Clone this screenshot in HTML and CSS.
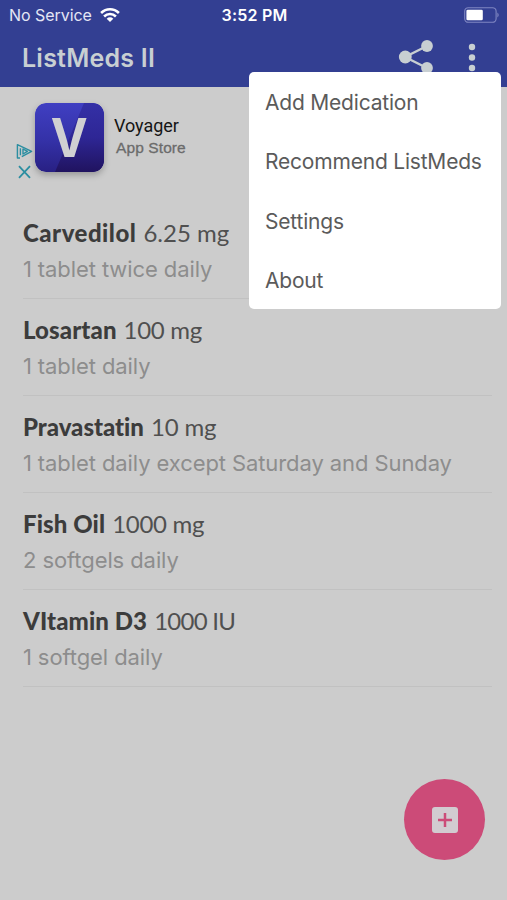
FILE: index.html
```html
<!DOCTYPE html>
<html lang="en">
<head>
<meta charset="utf-8">
<title>ListMeds II</title>
<link rel="stylesheet" href="styles.css">
</head>
<body>
<div class="screen">
  <header class="header">
    <div class="status">
      <div class="carrier"><span class="carrier-name">No Service</span>
        <svg class="wifi" width="20" height="16" viewBox="0 0 20 16" fill="none" stroke="#fff" stroke-width="2.6"><path d="M1.1 6C6.2.9 13.8.9 18.9 6M4.1 9.5C7.5 6.2 12.5 6.2 15.9 9.5"/><path d="M10 15 6.7 11.7C8.6 9.9 11.4 9.9 13.3 11.7Z" fill="#fff" stroke="none"/></svg>
      </div>
      <time class="clock">3:52 PM</time>
      <svg class="battery" width="37" height="16" viewBox="0 0 37 16"><rect x="1.7" y=".7" width="31.4" height="14.6" rx="3.6" fill="none" stroke="#8087c2" stroke-width="1.1"/><rect x="3.4" y="2.7" width="16.4" height="10.6" rx="1.4" fill="#fff"/><path d="M34.4 5.5q2.6 2.5 0 5z" fill="#8087c2"/></svg>
    </div>
    <div class="toolbar">
      <h1 class="title">ListMeds II</h1>
      <svg class="share" width="36" height="36" viewBox="0 0 36 36" fill="#c8cfd2"><path d="M29 7 7 18 29 29" fill="none" stroke="#c8cfd2" stroke-width="2.4"/><circle cx="29" cy="7" r="5.9"/><circle cx="7.3" cy="18" r="6.4"/><circle cx="29" cy="29" r="5.9"/></svg>
      <svg class="more" width="8" height="30" viewBox="0 0 8 30" fill="#c8cfd2"><circle cx="4" cy="4" r="3.2"/><circle cx="4" cy="14.5" r="3.2"/><circle cx="4" cy="25" r="3.2"/></svg>
    </div>
  </header>
  <section class="ad">
    <div class="ad-marks">
      <svg width="17" height="17" viewBox="0 0 17 17" fill="none" stroke="#2b8ea1" stroke-width="1.4" stroke-linejoin="round"><path d="M4 15H1.4V1.6L15.6 8.4 5.8 13.6M4.4 5.2v7M7 6v5l4.4-2.6z"/></svg>
      <svg width="17" height="14" viewBox="0 0 17 14" fill="none" stroke="#2b8ea1" stroke-width="1.8"><path d="M3 1.2 14 12.8M14 1.2 3 12.8"/></svg>
    </div>
    <svg class="app-icon" width="69" height="69" viewBox="0 0 69 69">
      <defs>
        <linearGradient id="base" x1="0" y1="0" x2="0" y2="1"><stop offset="0" stop-color="#403fc2"/><stop offset=".55" stop-color="#3431a7"/><stop offset="1" stop-color="#282083"/></linearGradient>
        <linearGradient id="shade" x1="0" y1="0" x2="0" y2="1"><stop offset="0" stop-color="#3430a6"/><stop offset=".5" stop-color="#2e2695"/><stop offset="1" stop-color="#20135f"/></linearGradient>
        <clipPath id="tile"><rect width="69" height="69" rx="11"/></clipPath>
      </defs>
      <g clip-path="url(#tile)"><path fill="url(#base)" d="M0 0h69v69H0z"/><path fill="url(#shade)" d="M49 0h20v69H20L28 50Z"/></g>
      <text class="mark" x="34.3" y="54" text-anchor="middle" textLength="37" lengthAdjust="spacingAndGlyphs">V</text>
    </svg>
    <div class="ad-copy"><div class="ad-name">Voyager</div><div class="ad-store">App Store</div></div>
  </section>
  <main class="meds">
    <article class="med"><div class="name"><b class="n1">Carvedilol</b><span class="d1">6.25 mg</span></div><div class="dose"><span class="one">1</span>tablet twice daily</div></article>
    <article class="med"><div class="name"><b class="n2">Losartan</b><span class="d2">100 mg</span></div><div class="dose"><span class="one">1</span>tablet daily</div></article>
    <article class="med"><div class="name"><b class="n3">Pravastatin</b><span class="d3">10 mg</span></div><div class="dose"><span class="one">1</span>tablet daily except Saturday and Sunday</div></article>
    <article class="med"><div class="name"><b class="n4">Fish Oil</b><span class="d4">1000 mg</span></div><div class="dose">2 softgels daily</div></article>
    <article class="med"><div class="name"><b class="n5">VItamin D3</b><span class="d5">1000 IU</span></div><div class="dose"><span class="one">1</span>softgel daily</div></article>
  </main>
  <nav class="menu">
    <a>Add Medication</a>
    <a>Recommend ListMeds</a>
    <a>Settings</a>
    <a>About</a>
  </nav>
  <button class="fab" aria-label="Add">
    <svg width="26" height="26" viewBox="0 0 26 26"><rect width="26" height="26" rx="3" fill="#d2cbd0"/><path d="M13 6v14M6 13h14" stroke="#cc4b78" stroke-width="2.5"/></svg>
  </button>
</div>
</body>
</html>
```
FILE: styles.css
```css
* { box-sizing: border-box; }
body { margin: 0; font-family: Inter, "Liberation Sans", sans-serif; }
.screen { position: relative; width: 507px; height: 900px; overflow: hidden; background: #cccccc; }
.header { height: 87px; background: #333f92; }
.status { display: grid; grid-template-columns: 1fr auto 1fr; align-items: center; height: 30px; padding: 0 7px 0 9px; color: #fff; white-space: nowrap; }
.carrier { display: flex; align-items: center; gap: 8px; color: #e4e6f5; font-size: 16px; }
.carrier-name { letter-spacing: -.05px; }
.clock { font-size: 16px; font-weight: 600; letter-spacing: .2px; }
.battery { justify-self: end; }
.toolbar { display: flex; align-items: flex-start; height: 57px; padding: 0 31px 0 22px; }
.title { flex: 1; margin: 0; font-size: 25px; line-height: 56px; font-weight: 600; letter-spacing: .23px; color: #c8cfd2; }
.share { margin: 9px 34px 0 0; }
.more { margin-top: 13px; }
.ad { display: flex; height: 115px; padding: 16px 0 0 16px; }
.ad-marks { display: flex; flex-direction: column; gap: 5px; width: 19px; padding-top: 40px; }
.ad-marks svg { display: block; }
.app-icon { border-radius: 11px; box-shadow: 0 3px 6px rgba(0, 0, 0, .25); }
.mark { font: 700 54px Inter, sans-serif; fill: #d0d0d2; }
.ad-copy { padding: 12px 0 0 10px; }
.ad-name { font: 18px/22px Roboto, sans-serif; color: #151515; letter-spacing: -.05px; }
.ad-store { margin-left: 2px; font: 500 15.5px/22px "Liberation Sans", sans-serif; color: #6b6b6b; -webkit-text-stroke: .3px #6b6b6b; letter-spacing: .1px; }
.meds { padding: 0 15px 0 23px; }
.med { height: 97px; padding-top: 13px; border-bottom: 1px solid #c1c1c1; white-space: nowrap; }
.name { display: flex; gap: 7px; height: 36px; font: 24px/36px Lato, sans-serif; color: #505050; }
.name b { font-weight: 900; color: #3c3c3c; }
.n1 { letter-spacing: .5px; }
.n2, .n4, .n5 { letter-spacing: .1px; }
.n3 { letter-spacing: -.03px; }
.d2, .d4 { letter-spacing: -.3px; }
.d3 { letter-spacing: -.15px; }
.d5 { letter-spacing: -.75px; }
.dose { height: 36px; font-size: 22px; line-height: 36px; letter-spacing: -.09px; color: #8d8d8d; }
.one { margin-right: 6px; }
.menu { position: absolute; left: 249px; top: 72px; width: 252px; height: 237px; border-radius: 5px; background: #fff; }
.menu a { display: block; height: 59.4px; padding-left: 16px; font-size: 21px; line-height: 61px; letter-spacing: -.2px; color: #5b5b5b; white-space: nowrap; }
.fab { position: absolute; left: 404px; top: 779px; width: 81px; height: 81px; padding: 0; border: 0; border-radius: 50%; display: flex; align-items: center; justify-content: center; background: #cc4b78; }
```
